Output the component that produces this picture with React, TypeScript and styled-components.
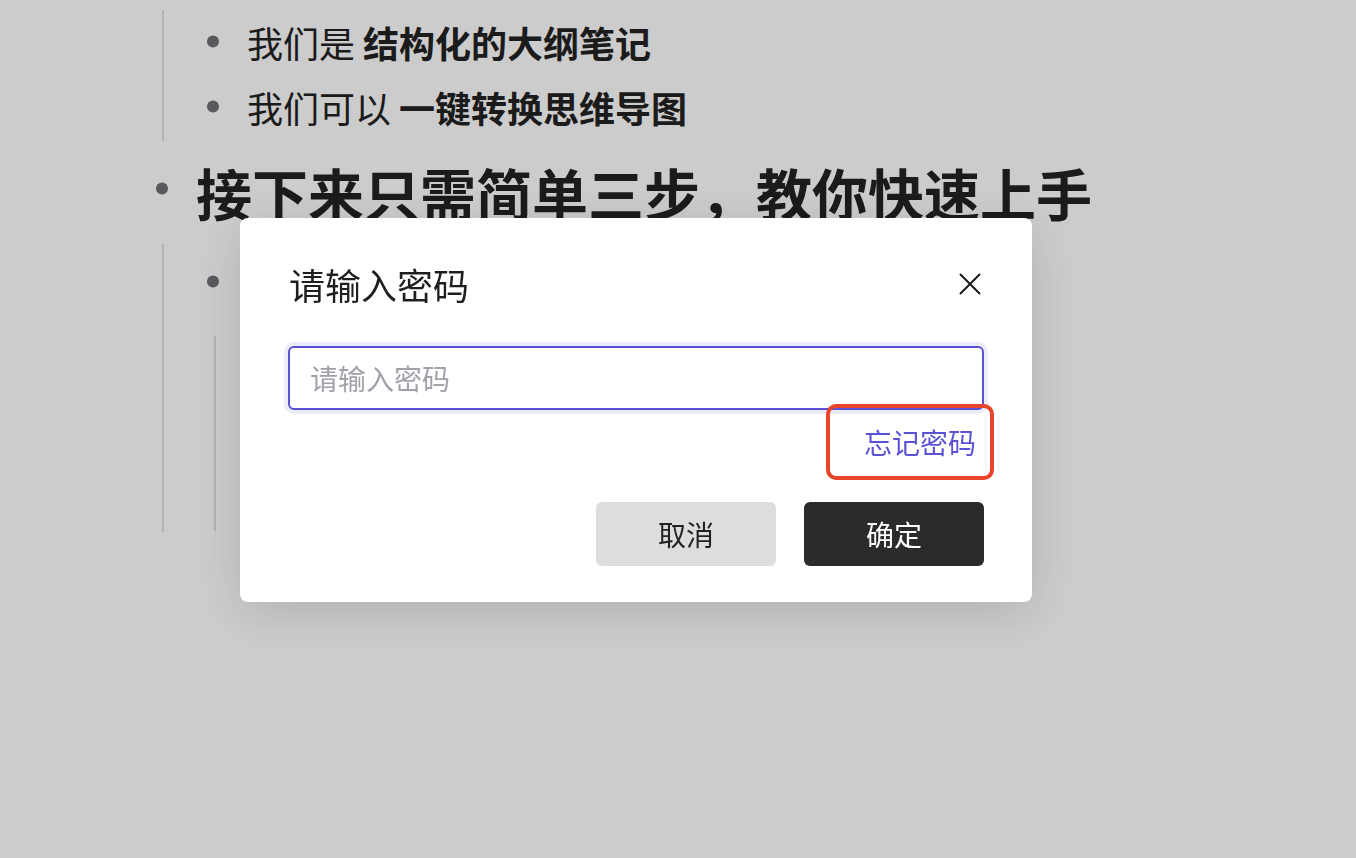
import React from "react";
import styled, { createGlobalStyle } from "styled-components";

const GlobalStyle = createGlobalStyle`
  html, body {
    margin: 0;
    padding: 0;
    background: #ffffff;
  }
  body {
    font-family: "Noto Sans CJK SC", "Noto Sans", sans-serif;
  }
  * {
    box-sizing: border-box;
  }
`;

const Document = styled.main`
  padding: 10px 0 0 156px;
  color: #222222;
  min-height: 858px;
`;

const Children = styled.div<{ $indent: number; $padTop?: number; $padBottom?: number; $gapTop?: number }>`
  margin-left: ${(p) => p.$indent}px;
  margin-top: ${(p) => p.$gapTop ?? 0}px;
  border-left: 2px solid #e0e0e0;
  padding-left: 43px;
  padding-top: ${(p) => p.$padTop ?? 0}px;
  padding-bottom: ${(p) => p.$padBottom ?? 0}px;
  display: flex;
  flex-direction: column;
`;

const Item = styled.div`
  display: flex;
  flex-direction: column;
`;

const Row = styled.div<{ $height: number }>`
  display: flex;
  align-items: center;
  height: ${(p) => p.$height}px;
  white-space: pre;
`;

const Dot = styled.span<{ $lift?: number }>`
  flex: none;
  width: 12px;
  height: 12px;
  border-radius: 50%;
  background: #6e6e75;
  margin-right: 28px;
  transform: translateY(${(p) => -(p.$lift ?? 0)}px);
`;

const Label = styled.span<{ $size: number }>`
  font-size: ${(p) => p.$size}px;
  line-height: 1.3;
  color: #222222;
`;

const Strong = styled.strong`
  font-weight: 700;
`;

const Overlay = styled.div`
  position: fixed;
  inset: 0;
  background: rgba(0, 0, 0, 0.2);
`;

const Dialog = styled.div`
  position: absolute;
  left: 240px;
  top: 218px;
  width: 792px;
  background: #ffffff;
  border-radius: 8px;
  box-shadow: 0 10px 50px rgba(0, 0, 0, 0.14);
  padding: 41px 48px 36px;
  display: flex;
  flex-direction: column;
`;

const Header = styled.div`
  display: flex;
  align-items: center;
  justify-content: space-between;
  height: 50px;
`;

const Title = styled.h2`
  margin: 0;
  font-size: 36px;
  font-weight: 400;
  line-height: 50px;
  color: #1f1f1f;
  padding-left: 1px;
`;

const CloseButton = styled.button`
  width: 22px;
  height: 22px;
  margin-right: 3px;
  padding: 0;
  border: none;
  background: none;
  display: flex;
  cursor: pointer;
`;

const PasswordInput = styled.input`
  margin-top: 37px;
  width: 100%;
  height: 64px;
  border: 2px solid #5a52d5;
  border-radius: 6px;
  box-shadow: 0 0 0 4px #ecebf9;
  padding: 0 20px;
  font-family: "Noto Sans CJK SC", "Noto Sans", sans-serif;
  font-size: 28px;
  color: #222222;
  outline: none;
  &::placeholder {
    color: #a1a1a9;
  }
`;

const LinkRow = styled.div`
  margin-top: 12px;
  display: flex;
  justify-content: flex-end;
`;

const ForgotLink = styled.a`
  position: relative;
  font-size: 28px;
  line-height: 40px;
  color: #5a52d5;
  padding-right: 8px;
  text-decoration: none;
  cursor: pointer;
`;

const Annotation = styled.span`
  position: absolute;
  left: -38px;
  right: -10px;
  top: -18px;
  bottom: -18px;
  border: 4px solid #e8432b;
  border-radius: 10px;
  pointer-events: none;
`;

const Footer = styled.div`
  margin-top: 40px;
  display: flex;
  justify-content: flex-end;
  gap: 28px;
`;

const ActionButton = styled.button<{ $primary?: boolean }>`
  width: 180px;
  height: 64px;
  border: none;
  border-radius: 6px;
  font-family: "Noto Sans CJK SC", "Noto Sans", sans-serif;
  font-size: 28px;
  background: ${(p) => (p.$primary ? "#2b2b2d" : "#dddde0")};
  color: ${(p) => (p.$primary ? "#ffffff" : "#222222")};
  cursor: pointer;
`;

function Bullet({
  plain,
  bold,
  size = 36,
  height = 65,
  lift = 1.5,
}: {
  plain?: string;
  bold?: string;
  size?: number;
  height?: number;
  lift?: number;
}) {
  return (
    <Row $height={height}>
      <Dot $lift={lift} />
      {(plain || bold) && (
        <Label $size={size}>
          {plain}
          {plain && bold ? " " : null}
          {bold && <Strong>{bold}</Strong>}
        </Label>
      )}
    </Row>
  );
}

export default function App() {
  return (
    <>
      <GlobalStyle />
      <Document>
        <Children $indent={6} $padBottom={1}>
          <Item>
            <Bullet plain="我们是" bold="结构化的大纲笔记" />
          </Item>
          <Item>
            <Bullet plain="我们可以" bold="一键转换思维导图" />
          </Item>
        </Children>
        <Item>
          <Bullet bold="接下来只需简单三步，教你快速上手" size={56} height={103} lift={4.5} />
        </Item>
        <Children $indent={6} $padTop={6} $padBottom={1}>
          <Item>
            <Bullet />
            <Children $indent={7} $gapTop={21}>
              <Item>
                <Bullet />
              </Item>
              <Item>
                <Bullet />
              </Item>
              <Item>
                <Bullet />
              </Item>
            </Children>
          </Item>
        </Children>
      </Document>
      <Overlay>
        <Dialog role="dialog" aria-modal="true">
          <Header>
            <Title>请输入密码</Title>
            <CloseButton aria-label="关闭">
              <svg width="22" height="22" viewBox="0 0 22 22" fill="none">
                <path d="M1.5 1.5L20.5 20.5M20.5 1.5L1.5 20.5" stroke="#1a1a1a" strokeWidth="2" strokeLinecap="round" />
              </svg>
            </CloseButton>
          </Header>
          <PasswordInput type="password" placeholder="请输入密码" />
          <LinkRow>
            <ForgotLink>
              忘记密码
              <Annotation />
            </ForgotLink>
          </LinkRow>
          <Footer>
            <ActionButton>取消</ActionButton>
            <ActionButton $primary>确定</ActionButton>
          </Footer>
        </Dialog>
      </Overlay>
    </>
  );
}
